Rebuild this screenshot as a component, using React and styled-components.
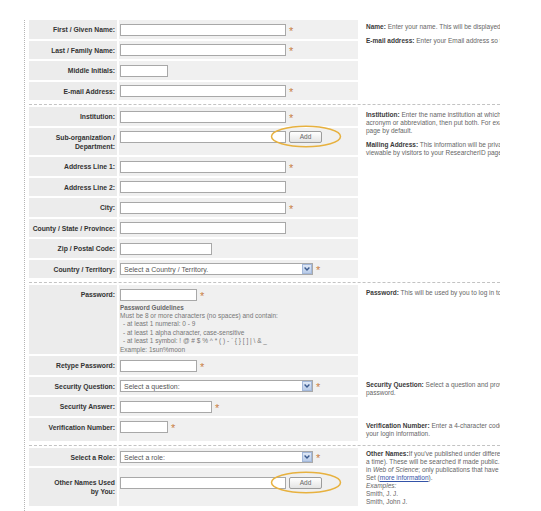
import React from "react";
import styled, { createGlobalStyle } from "styled-components";

const GlobalStyle = createGlobalStyle`
  body {
    margin: 0;
    background: #fff;
    font-family: "Liberation Sans", Arial, sans-serif;
  }
  * { box-sizing: border-box; }
`;

const Frame = styled.div`
  margin: 20px 0 0 24px;
  width: 476px;
  height: 491px;
  border-left: 1px dotted #b5b5b5;
  padding-left: 4px;
  overflow: hidden;
`;

const Section = styled.div`
  display: grid;
  grid-template-columns: 88px 239px minmax(0, 1fr);
  column-gap: 2px;
  row-gap: 2px;
`;

const Divider = styled.div`
  border-top: 1px dashed #c3c3c3;
  margin: 4px 0 2px;
`;

const Label = styled.div`
  grid-column: 1;
  display: flex;
  justify-content: flex-end;
  align-items: ${(p) => (p.$middle ? "center" : "flex-start")};
  text-align: right;
  white-space: nowrap;
  padding: ${(p) => p.$top ?? 5}px 2px 4.5px 0;
  background: #ececec;
  color: #333;
  font-size: 6.8px;
  font-weight: bold;
  line-height: 9px;
`;

const InputCell = styled.div`
  grid-column: 2;
  background: #f0f0f0;
  padding: ${(p) => p.$top ?? 3.5}px 2px ${(p) => p.$bottom ?? 3}px 1px;
  min-height: ${(p) => p.$minH || 0}px;
`;

const Controls = styled.div`
  display: flex;
  align-items: flex-start;
  height: 12px;
`;

const TextBox = styled.input`
  width: ${(p) => p.$w}px;
  height: 12px;
  padding: 0;
  margin: 0;
  border: 1px solid #a8a8a8;
  border-radius: 0;
  background: #fff;
  outline: none;
`;

const SelectBox = styled.div`
  width: 193px;
  height: 12px;
  border: 1px solid #a8a8a8;
  background: #fff;
  display: flex;
  align-items: center;
  justify-content: space-between;
  padding-left: 3px;
  color: #555;
  font-size: 7px;
  white-space: nowrap;
`;

const Arrow = styled.span`
  width: 10px;
  height: 10px;
  background: linear-gradient(#dfe8f6, #b8cbe8);
  border: 1px solid #a3b8da;
  display: flex;
  align-items: center;
  justify-content: center;
`;

const Star = styled.span`
  margin-left: 3px;
  height: 12px;
  padding-top: 3px;
  color: #c98046;
  font-size: 11px;
  line-height: 9px;
`;

const AddWrap = styled.span`
  position: relative;
  margin-left: 3px;
  display: flex;
`;

const AddButton = styled.button`
  width: 33px;
  height: 12px;
  padding: 0;
  border: 1px solid #9c9c9c;
  border-radius: 2px;
  background: linear-gradient(#ffffff, #e4e4e4);
  color: #666;
  font-family: "Liberation Sans", Arial, sans-serif;
  font-size: 6.5px;
  line-height: 10px;
`;

const Ring = styled.svg`
  position: absolute;
  left: -19px;
  top: -6px;
  pointer-events: none;
`;

const Guidelines = styled.div`
  margin-top: 3px;
  color: #777;
  font-size: 6.5px;
  line-height: 8.4px;
  white-space: nowrap;
`;

const GuideTitle = styled.div`
  font-weight: bold;
  font-size: 6.3px;
  color: #666;
`;

const GuideItem = styled.div`
  padding-left: ${(p) => (p.$indent ? 3 : 0)}px;
`;

const Help = styled.div`
  grid-column: 3;
  grid-row: ${(p) => p.$row} / span ${(p) => p.$span || 1};
  padding: ${(p) => p.$top ?? 4}px 0 ${(p) => p.$bottom ?? 3}px 6px;
  color: #666;
  font-size: 6.5px;
  line-height: 8px;
  white-space: nowrap;
  overflow: hidden;
`;

const Para = styled.div`
  margin-bottom: 5.5px;
`;

const Line = styled.div``;

const B = styled.b`
  color: #3a3a3a;
`;

const More = styled.span`
  color: #3454a8;
  text-decoration: underline;
`;

const Chevron = () => (
  <svg width="8" height="8" viewBox="0 0 8 8">
    <path d="M1.6 2.6 L4 5 L6.4 2.6" fill="none" stroke="#3b5a8e" strokeWidth="1.4" />
  </svg>
);

const Add = () => (
  <AddWrap>
    <AddButton type="button">Add</AddButton>
    <Ring width="72" height="23" viewBox="0 0 72 23">
      <ellipse cx="36" cy="11.5" rx="34.5" ry="10.2" fill="none" stroke="#e7b13f" strokeWidth="1.5" />
    </Ring>
  </AddWrap>
);

const Field = ({ label, width = 166, select, required, add, middle, labelTop, top, bottom, minH, children }) => (
  <>
    <Label $middle={middle} $top={labelTop}>
      <span>{label}</span>
    </Label>
    <InputCell $top={top} $bottom={bottom} $minH={minH}>
      <Controls>
        {select ? (
          <SelectBox>
            {select}
            <Arrow>
              <Chevron />
            </Arrow>
          </SelectBox>
        ) : (
          <TextBox type="text" $w={width} />
        )}
        {add && <Add />}
        {required && <Star>*</Star>}
      </Controls>
      {children}
    </InputCell>
  </>
);

const symbols = "- at least 1 symbol: ! @ # $ % ^ * ( ) - ` { } [ ] | \\ & _";

export default function App() {
  return (
    <>
      <GlobalStyle />
      <Frame>
        <Section>
          <Field label="First / Given Name:" required />
          <Field label="Last / Family Name:" required />
          <Field label="Middle Initials:" width={48} />
          <Field label="E-mail Address:" required />
          <Help $row={1} $span={4} $top={3}>
            <Para>
              <B>Name:</B> Enter your name. This will be displayed on your ResearcherID profile.
            </Para>
            <Para>
              <B>E-mail address:</B> Enter your Email address so that we can contact you.
            </Para>
          </Help>
        </Section>
        <Divider />
        <Section>
          <Field label="Institution:" required />
          <Field
            label={
              <>
                Sub-organization /<br />
                Department:
              </>
            }
            middle
            add
          />
          <Field label="Address Line 1:" required />
          <Field label="Address Line 2:" />
          <Field label="City:" required />
          <Field label="County / State / Province:" />
          <Field label="Zip / Postal Code:" width={92} />
          <Field label="Country / Territory:" select="Select a Country / Territory." required />
          <Help $row={1} $span={8}>
            <Para>
              <Line>
                <B>Institution:</B> Enter the name institution at which you are employed. If it has an
              </Line>
              <Line>acronym or abbreviation, then put both. For example, it will be shown on your</Line>
              <Line>page by default.</Line>
            </Para>
            <Para>
              <Line>
                <B>Mailing Address:</B> This information will be private and will not be
              </Line>
              <Line>viewable by visitors to your ResearcherID page.</Line>
            </Para>
          </Help>
        </Section>
        <Divider />
        <Section>
          <Field label="Password:" width={77} required bottom={0.5}>
            <Guidelines>
              <GuideTitle>Password Guidelines</GuideTitle>
              <GuideItem>Must be 8 or more characters (no spaces) and contain:</GuideItem>
              <GuideItem $indent>- at least 1 numeral: 0 - 9</GuideItem>
              <GuideItem $indent>- at least 1 alpha character, case-sensitive</GuideItem>
              <GuideItem $indent>{symbols}</GuideItem>
              <GuideItem>Example: 1sun%moon</GuideItem>
            </Guidelines>
          </Field>
          <Field label="Retype Password:" width={77} required />
          <Field label="Security Question:" select="Select a question:" required />
          <Field label="Security Answer:" width={92} required />
          <Field label="Verification Number:" width={48} required />
          <Help $row={1}>
            <B>Password:</B> This will be used by you to log in to ResearcherID.
          </Help>
          <Help $row={3} $span={2}>
            <Line>
              <B>Security Question:</B> Select a question and provide an answer in case you forget your
            </Line>
            <Line>password.</Line>
          </Help>
          <Help $row={5}>
            <Line>
              <B>Verification Number:</B> Enter a 4-character code that we can use to verify
            </Line>
            <Line>your login information.</Line>
          </Help>
        </Section>
        <Divider />
        <Section>
          <Field label="Select a Role:" select="Select a role:" required />
          <Field
            label={
              <>
                Other Names Used
                <br />
                by You:
              </>
            }
            labelTop={10}
            add
            top={9}
            minH={38}
          />
          <Help $row={1} $span={2} $top={2.5} $bottom={0}>
            <Line>
              <B>Other Names:</B>If you've published under different names, add them here (one at
            </Line>
            <Line>a time). These will be searched if made public. They are also used for searching</Line>
            <Line>
              in <i>Web of Science</i>; only publications that have been added to your Publication
            </Line>
            <Line>
              Set (<More>more information</More>).
            </Line>
            <Line>
              <i>Examples:</i>
            </Line>
            <Line>Smith, J. J.</Line>
            <Line>Smith, John J.</Line>
          </Help>
        </Section>
      </Frame>
    </>
  );
}
